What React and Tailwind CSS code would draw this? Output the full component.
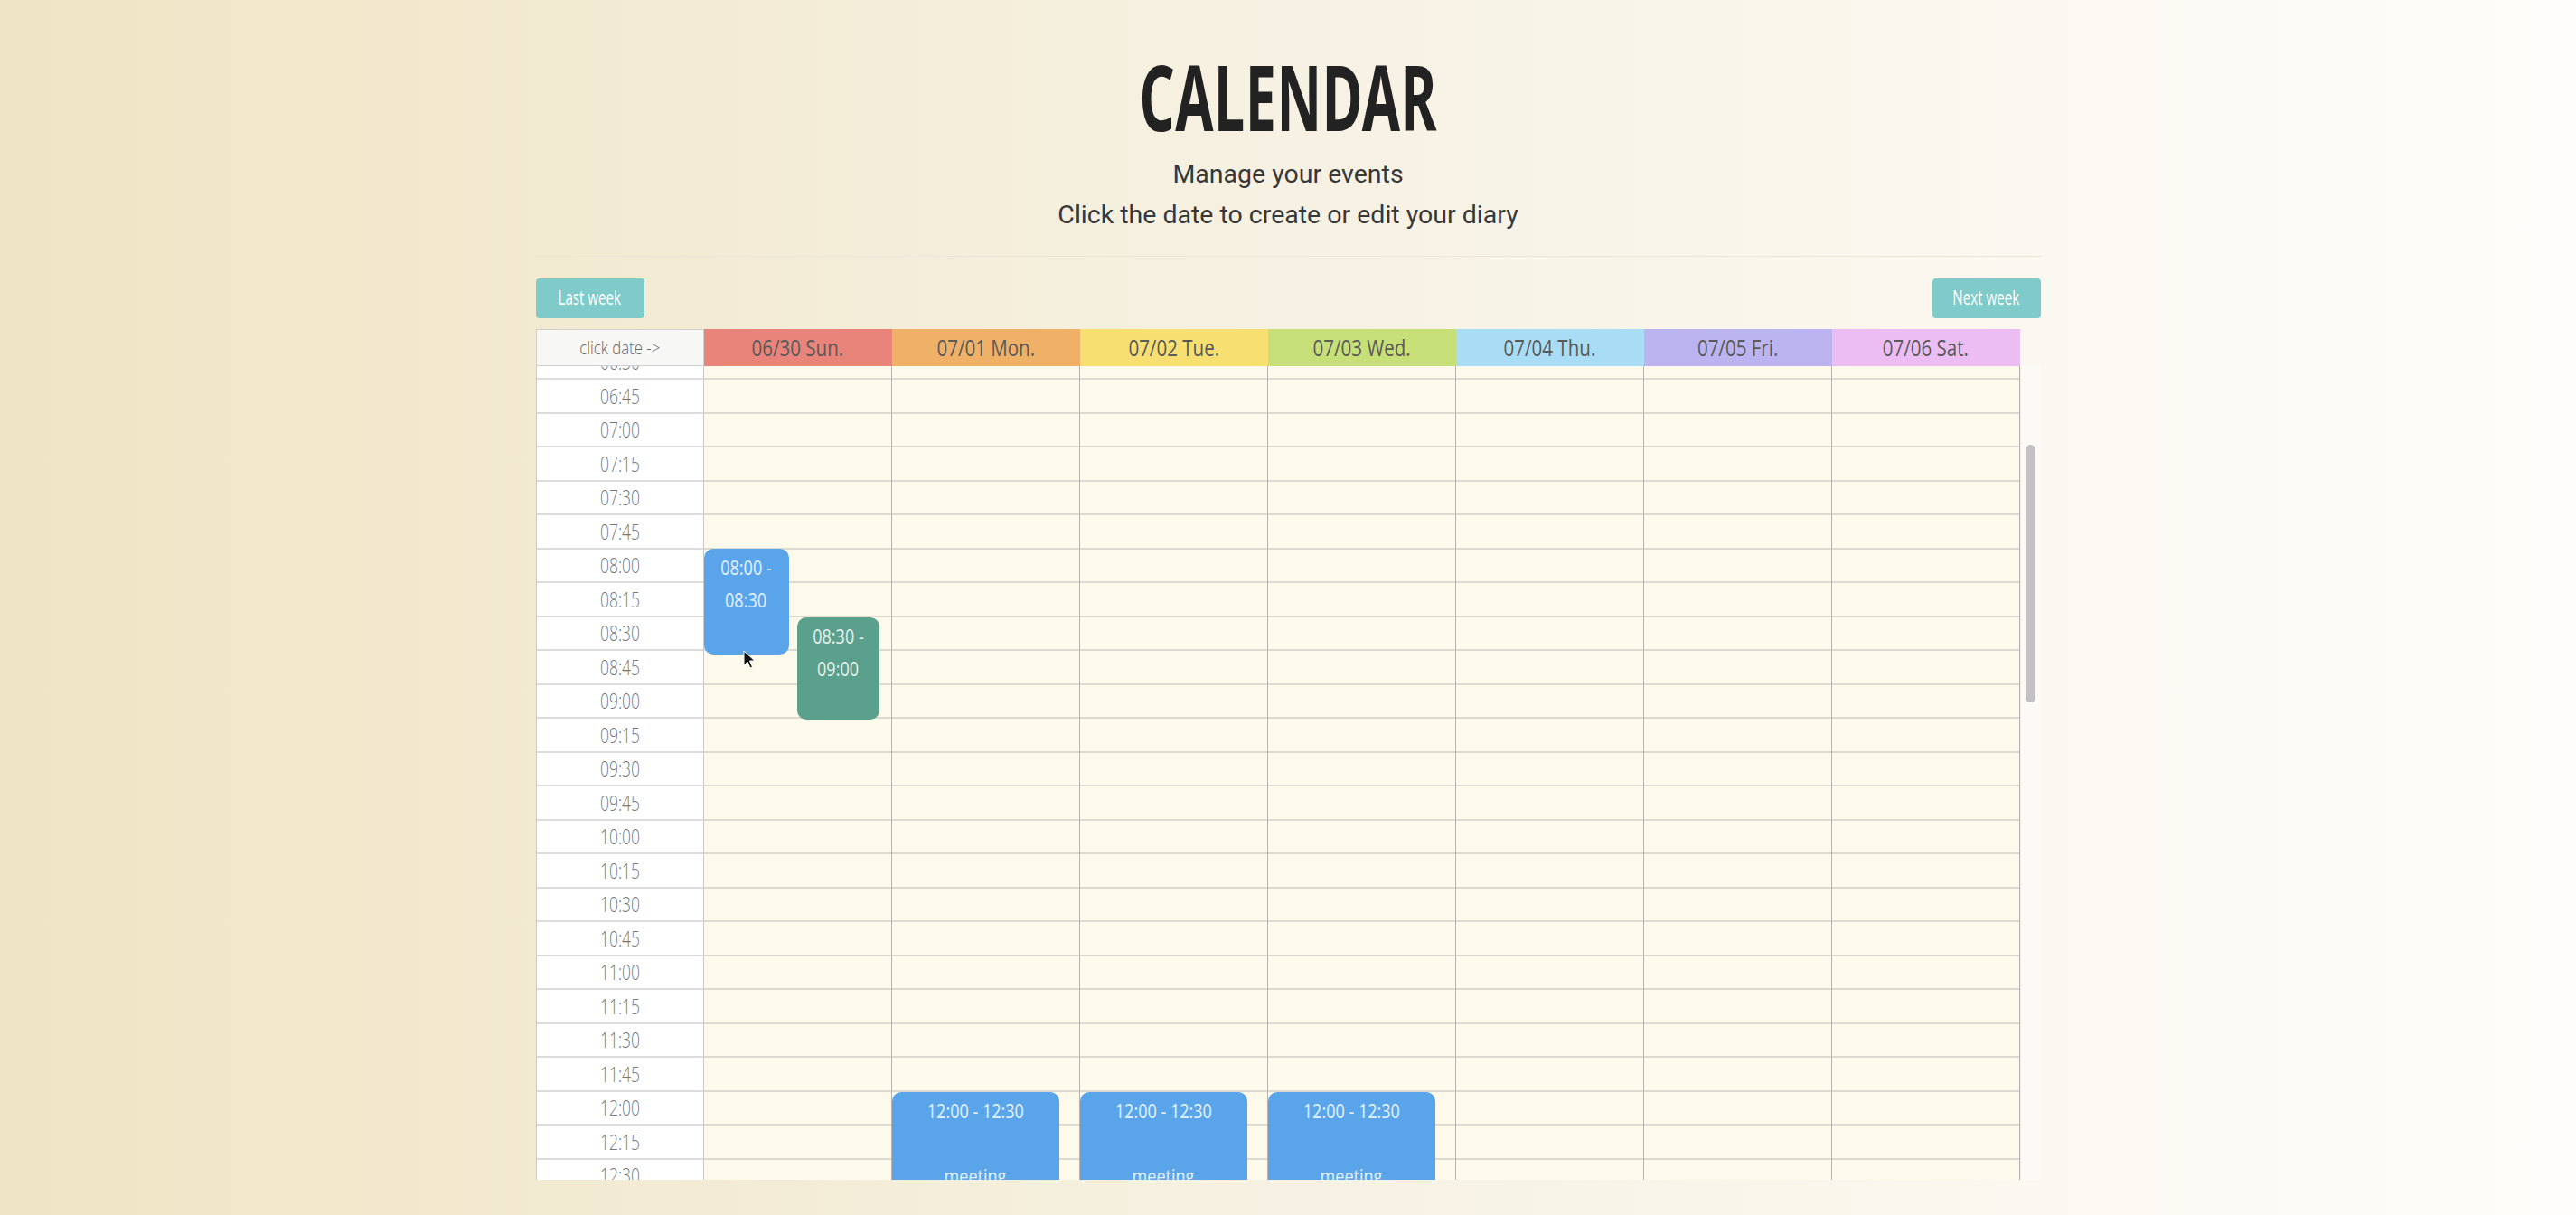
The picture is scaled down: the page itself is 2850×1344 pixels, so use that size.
import React from "react";

const days = [
  { label: "06/30 Sun.", bg: "bg-[#e8847a]" },
  { label: "07/01 Mon.", bg: "bg-[#efb067]" },
  { label: "07/02 Tue.", bg: "bg-[#f7df72]" },
  { label: "07/03 Wed.", bg: "bg-[#c6df76]" },
  { label: "07/04 Thu.", bg: "bg-[#a8ddf5]" },
  { label: "07/05 Fri.", bg: "bg-[#bcb4f0]" },
  { label: "07/06 Sat.", bg: "bg-[#ecbdf3]" },
];

const times = [];
for (let m = 6 * 60 + 30; m <= 13 * 60 + 30; m += 15) {
  const h = String(Math.floor(m / 60)).padStart(2, "0");
  const mm = String(m % 60).padStart(2, "0");
  times.push(`${h}:${mm}`);
}

const events = {
  0: [
    { lines: ["08:00 -", "08:30"], top: 224, height: 117, left: 0, width: 94, color: "bg-[#5aa5ea]" },
    { lines: ["08:30 -", "09:00"], top: 300, height: 113, left: 103, width: 91, color: "bg-[#5b9f8d]" },
  ],
  1: [{ lines: ["12:00 - 12:30", "", "meeting"], top: 825, height: 150, left: 0, width: 185, color: "bg-[#5aa5ea]" }],
  2: [{ lines: ["12:00 - 12:30", "", "meeting"], top: 825, height: 150, left: 0, width: 185, color: "bg-[#5aa5ea]" }],
  3: [{ lines: ["12:00 - 12:30", "", "meeting"], top: 825, height: 150, left: 0, width: 185, color: "bg-[#5aa5ea]" }],
};

const sans = "font-['Open_Sans','Noto_Sans',sans-serif]";

export default function App() {
  return (
    <div className="relative w-[2850px] h-[1344px] overflow-hidden bg-gradient-to-r from-[#efe4c4] via-[#f6f1e2] to-[#fefdfb]">
      <div className="w-[1665px] mx-auto pt-[56px] flex flex-col">
        <h1 className="text-center text-[100px] leading-none font-bold text-[#222222] font-['Noto_Sans',sans-serif] tracking-[1px]">
          <span className="inline-block scale-x-[0.61]">CALENDAR</span>
        </h1>
        <div className="mt-[14px] text-center font-['Roboto',sans-serif] text-[28.5px] leading-[45px] text-[#383838]">
          <div>Manage your events</div>
          <div>Click the date to create or edit your diary</div>
        </div>
        <div className="mt-[23px] border-t border-[#ebe6d8]" />
        <div className="mt-[24px] flex justify-between">
          <button className={`w-[120px] h-[44px] rounded-[4px] bg-[#7ecbca] text-white text-[21px] ${sans}`}>
            <span className="inline-block scale-x-[0.72]">Last week</span>
          </button>
          <button className={`w-[120px] h-[44px] rounded-[4px] bg-[#7ecbca] text-white text-[21px] ${sans}`}>
            <span className="inline-block scale-x-[0.72]">Next week</span>
          </button>
        </div>
        <div className="mt-[12px] flex">
          <div className="flex flex-col">
            <div className={`grid grid-cols-[186px_repeat(7,208px)] h-[41px] ${sans}`}>
              <div className="bg-[#f7f7f6] border border-[#cfcfcf] flex items-center justify-center text-[21px] text-[#666666] font-light">
                <span className="inline-block scale-x-[0.8]">click date -&gt;</span>
              </div>
              {days.map((d) => (
                <div key={d.label} className={`${d.bg} flex items-center justify-center text-[26px] text-[#5a5a5a]`}>
                  <span className="inline-block scale-x-[0.79]">{d.label}</span>
                </div>
              ))}
            </div>
            <div className="h-[900px] overflow-hidden">
              <div className="grid grid-cols-[186px_repeat(7,208px)] -mt-[22.5px]">
                <div className={`flex flex-col bg-white border-l border-r border-[#c9c9c9] ${sans}`}>
                  {times.map((t) => (
                    <div key={t} className="h-[37.5px] shrink-0 border-b-2 border-[#dcdcdc] flex items-center justify-center text-[23px] font-light text-[#777777]">
                      <span className="inline-block scale-x-[0.76]">{t}</span>
                    </div>
                  ))}
                </div>
                {days.map((d, i) => (
                  <div key={d.label} className="relative flex flex-col bg-[#fefaeb] border-r border-[#b5b3ac]">
                    {times.map((t) => (
                      <div key={t} className="h-[37.5px] shrink-0 border-b-2 border-[#dddad0]" />
                    ))}
                    {(events[i] || []).map((e, k) => (
                      <div
                        key={k}
                        className={`absolute ${e.color} rounded-[10px] flex flex-col items-center pt-[2px] text-[22px] leading-[36px] text-white/85 ${sans}`}
                        style={{ top: e.top, height: e.height, left: e.left, width: e.width }}
                      >
                        {e.lines.map((l, j) => (
                          <div key={j} className="h-[36px] whitespace-nowrap">
                            <span className="inline-block scale-x-[0.82]">{l}</span>
                          </div>
                        ))}
                      </div>
                    ))}
                  </div>
                ))}
              </div>
            </div>
          </div>
          <div className="w-[23px] flex flex-col pt-[41px]">
            <div className="h-[900px] bg-[#fbfaf6] border-l border-[#efede6] flex justify-center">
              <div className="mt-[87px] w-[11px] h-[285px] rounded-full bg-[#c2c2c2]" />
            </div>
          </div>
        </div>
      </div>
      <svg className="absolute left-[822px] top-[719px]" width="14" height="22" viewBox="0 0 14 22">
        <path d="M1 1 L1 17 L5 13 L8 20 L10.5 19 L7.5 12 L13 12 Z" fill="#111" stroke="#fff" strokeWidth="1" />
      </svg>
    </div>
  );
}
